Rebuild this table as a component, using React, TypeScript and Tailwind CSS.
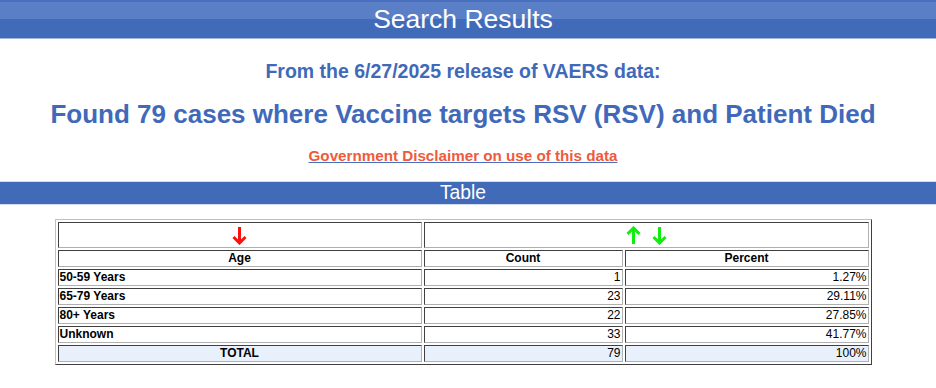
const ROWS = [
  { label: "50-59 Years", count: "1", pct: "1.27%" },
  { label: "65-79 Years", count: "23", pct: "29.11%" },
  { label: "80+ Years", count: "22", pct: "27.85%" },
  { label: "Unknown", count: "33", pct: "41.77%" },
];

const cell =
  "border border-t-[#404040] border-l-[#404040] border-r-[#b0b0b0] border-b-[#b0b0b0] px-[1px] py-0 text-[12px] leading-[15px]";

function Arrow({ up, color }: { up?: boolean; color: string }) {
  return (
    <svg
      width="15"
      height="19"
      viewBox="0 0 15 19"
      className={up ? "block rotate-180" : "block"}
      fill="none"
      stroke={color}
      strokeWidth="3"
    >
      <path d="M7.5 1v16" />
      <path d="M1.5 11 7.5 17l6-6" strokeLinejoin="miter" />
    </svg>
  );
}

export default function App() {
  return (
    <div className="min-h-[388px] bg-white font-['Liberation_Sans',Arial,sans-serif]">
      <header className="border-b border-[#9fb6e3] bg-[linear-gradient(to_bottom,#4a6fbf_0px,#4a6fbf_2px,#5a7fc6_2px,#5a7fc6_19px,#416ab9_19px,#416ab9_100%)] pr-[10px]">
        <h1 className="h-[38px] text-center text-[26.5px] leading-[38px] text-white">
          Search Results
        </h1>
      </header>

      <section className="pr-[10px] text-center font-bold text-[#4169b9]">
        <p className="mt-[21px] text-[19.5px] leading-[22px]">
          From the 6/27/2025 release of VAERS data:
        </p>
        <h2 className="mt-[17px] text-[26px] leading-[30px]">
          Found 79 cases where Vaccine targets RSV (RSV) and Patient Died
        </h2>
        <a
          href="#"
          className="mt-[18px] inline-block text-[15.2px] leading-[17px] text-[#f05a3c] underline decoration-[#4a6fc0]"
        >
          Government Disclaimer on use of this data
        </a>
      </section>

      <div className="mt-[13px] border-y border-[#cfdcf3] bg-[#416ab9] pr-[10px]">
        <h3 className="h-[22px] text-center text-[19.3px] leading-[22px] text-white">
          Table
        </h3>
      </div>

      <div className="pr-[10px] pt-[14px]">
        <table className="mx-auto w-[817px] table-fixed border-separate border-spacing-[2px] border border-t-[#c0c0c0] border-l-[#c0c0c0] border-r-[#404040] border-b-[#404040] text-black">
          <colgroup>
            <col className="w-[364px]" />
            <col className="w-[199px]" />
            <col />
          </colgroup>
          <tbody>
            <tr>
              <td className={`${cell} h-[26px]`}>
                <div className="flex justify-center pt-[1px]">
                  <Arrow color="#ff1010" />
                </div>
              </td>
              <td colSpan={2} className={`${cell} h-[26px]`}>
                <div className="flex justify-center gap-[11px] pt-[1px]">
                  <Arrow up color="#10ee10" />
                  <Arrow color="#10ee10" />
                </div>
              </td>
            </tr>
            <tr className="font-bold">
              <td className={`${cell} text-center`}>Age</td>
              <td className={`${cell} text-center`}>Count</td>
              <td className={`${cell} text-center`}>Percent</td>
            </tr>
            {ROWS.map((row) => (
              <tr key={row.label}>
                <td className={`${cell} font-bold`}>{row.label}</td>
                <td className={`${cell} text-right`}>{row.count}</td>
                <td className={`${cell} text-right`}>{row.pct}</td>
              </tr>
            ))}
            <tr className="bg-[#e8f0fc]">
              <td className={`${cell} text-center font-bold`}>TOTAL</td>
              <td className={`${cell} text-right`}>79</td>
              <td className={`${cell} text-right`}>100%</td>
            </tr>
          </tbody>
        </table>
      </div>
    </div>
  );
}
